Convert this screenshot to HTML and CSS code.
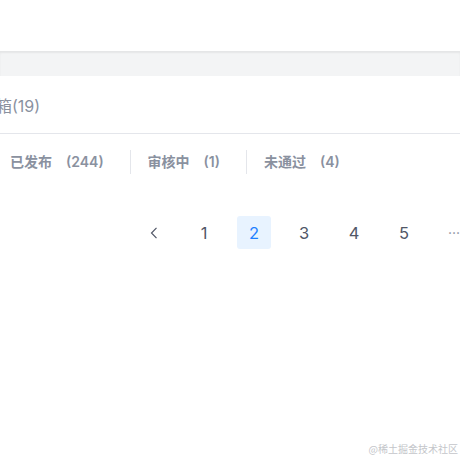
FILE: index.html
```html
<!DOCTYPE html>
<html lang="zh">
<head>
<meta charset="utf-8">
<link rel="stylesheet" href="styles.css">
</head>
<body>
<div class="topbar"></div>
<div class="band"></div>
<main class="card">
  <div class="head"><span class="title">草稿箱(19)</span></div>
  <nav class="tabs">
    <span class="tab">已发布<span class="count">(244)</span></span>
    <span class="tab">审核中<span class="count">(1)</span></span>
    <span class="tab">未通过<span class="count">(4)</span></span>
  </nav>
  <div class="pager">
    <span class="page prev"><svg width="8" height="12" viewBox="0 0 8 12"><path d="M6.5 0.8 L1.5 6 L6.5 11.2" fill="none" stroke="#515767" stroke-width="1.2"/></svg></span>
    <span class="page">1</span>
    <span class="page active">2</span>
    <span class="page">3</span>
    <span class="page">4</span>
    <span class="page">5</span>
    <span class="page more">···</span>
  </div>
</main>
<div class="mark">@稀土掘金技术社区</div>
</body>
</html>
```
FILE: styles.css
```css
html, body {
  margin: 0;
  padding: 0;
  width: 460px;
  height: 460px;
  overflow: hidden;
  background: #ffffff;
  font-family: Inter, "Noto Sans CJK SC", "Noto Sans", sans-serif;
  position: relative;
}
.topbar {
  height: 51px;
  background: #ffffff;
}
.band {
  height: 25px;
  background: #f3f4f5;
  box-shadow: inset 0 2px 2px rgba(0,0,0,0.06);
}
.card {
  background: #ffffff;
}
.head {
  height: 57px;
  border-bottom: 1px solid #e4e6eb;
  display: flex;
  align-items: center;
  margin-left: -36px;
}
.title {
  font-size: 16px;
  color: #8a919f;
  line-height: 24px;
  padding-top: 2px;
}
.tabs {
  display: flex;
  align-items: center;
  height: 24px;
  margin-top: 16px;
  padding-left: 10px;
}
.tab {
  font-size: 14px;
  font-weight: 600;
  color: #8a919f;
  line-height: 24px;
  padding-right: 26px;
  margin-right: 17px;
  border-right: 1px solid #e4e6eb;
  display: flex;
}
.tab:last-child {
  border-right: none;
}
.count {
  margin-left: 14px;
}
.pager {
  display: flex;
  gap: 16px;
  margin-top: 42px;
  padding-left: 137px;
}
.page {
  flex: 0 0 34px;
  height: 33px;
  display: flex;
  align-items: center;
  justify-content: center;
  font-size: 16.5px;
  color: #515767;
  border-radius: 3px;
}
.page.active {
  background: #e8f3ff;
  color: #1e80ff;
}
.page.more {
  font-size: 14px;
  color: #8a919f;
}
.mark {
  position: absolute;
  right: 2px;
  bottom: 4px;
  font-size: 10px;
  color: #c4c6ca;
  font-family: "Noto Sans CJK SC", sans-serif;
}
```
